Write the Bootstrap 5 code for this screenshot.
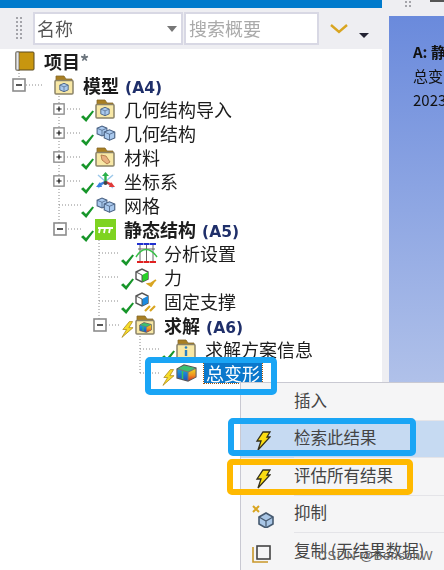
<!DOCTYPE html>
<html lang="zh">
<head>
    <meta charset="UTF-8">
    <meta name="viewport" content="width=device-width, initial-scale=1.0">
    <title>Mechanical</title>
    <link href="https://cdn.jsdelivr.net/npm/bootstrap@5.3.0/dist/css/bootstrap.min.css" rel="stylesheet">
    <style>
        html, body { height: 570px; overflow: hidden; }
        body {
            background-color: #eeeef2;
            font-family: "Noto Sans CJK SC", "Liberation Sans", sans-serif;
            color: #222;
        }
        .stage { width: 444px; height: 570px; filter: blur(0.35px); }
        .left-pane { width: 382px; }
        .title-strip { height: 8px; background-color: #007acc; }
        .tool-strip { height: 41px; padding: 4px 0 4px 15px; gap: 11px; }
        .grip { width: 7px; height: 25px; background-image: radial-gradient(#a4a4aa 1px, transparent 1.2px); background-size: 4px 4px; }
        .combo { width: 150px; height: 33px; background: #fff; border: 2px solid #d8d8e4; padding: 0 4px 0 2px; font-size: 18px; color: #555; }
        .combo-caret { width: 0; height: 0; border-left: 5px solid transparent; border-right: 5px solid transparent; border-top: 6px solid #777; }
        .search-box { width: 135px; height: 33px; margin-left: -10px; background: #fff; border: 2px solid #d8d8e4; padding: 0 3px; font-size: 18px; color: #aaa; }
        .drop-caret { width: 0; height: 0; margin: 14px 0 0 11px; border-left: 5px solid transparent; border-right: 5px solid transparent; border-top: 5px solid #223; }
        .tree-pane { height: 521px; background: #fff; }
        .wires { left: 0; top: 0; }
        .tree-row { height: 24px; font-size: 18px; line-height: 24px; white-space: nowrap; color: #1c1c1c; }
        .lvl-0 { padding-left: 12px; }
        .lvl-1 { padding-left: 53px; }
        .lvl-2 { padding-left: 93px; }
        .lvl-3 { padding-left: 134px; }
        .box-slot { width: 28px; flex: none; }
        .state-slot { width: 14px; flex: none; align-self: flex-end; margin-bottom: -1px; }
        .icon-slot { width: 29px; flex: none; }
        .root-row { padding-left: 15px; }
        .tree-name.fw-bold em { font: bold 15.5px "DejaVu Sans", sans-serif; color: #1f2f6a; margin-left: 2px; }
        .tree-row svg { display: block; }
        .picked { background: #0a78cc; color: #fff; outline: 1px dotted #a4580c; line-height: 20px; padding: 0 2px; margin-left: -1px; }
        .gap-strip { width: 7px; }
        .right-pane { width: 55px; }
        .right-head { height: 16px; padding-left: 15px; }
        .head-grip { width: 7px; height: 8px; background-image: radial-gradient(#a4a4aa 1px, transparent 1.2px); background-size: 4px 4px; }
        .head-stub { width: 14px; height: 2px; margin-left: 19px; background: #555; }
        .blue-view {
            height: 554px; padding: 24px 0 0 24px; overflow: hidden; white-space: nowrap;
            font-size: 15px; line-height: 24px; color: #111;
            background: linear-gradient(#6a8adc, #b4c4ea 70%);
        }
        .ctx-menu { left: 240px; top: 382px; width: 220px; height: 200px; background: #f5f5f6; border: 1px solid #c9c9d2; font-size: 16.5px; color: #444; }
        .ctx-item { height: 37.5px; padding-left: 11px; }
        .ctx-icon { width: 42px; flex: none; }
        .bolt-icon { margin-left: 3px; }
        .ctx-label { flex: 1; height: 100%; display: flex; align-items: center; padding-bottom: 2px; border-bottom: 1px solid #e4e4e8; white-space: nowrap; }
        .ctx-item.hot { background: #c6daf2; }
        .ctx-item:last-child .ctx-label { border-bottom: 0; }
        .mark-box { border: 6px solid #1aa5f5; border-radius: 5px; }
        .mark-one { left: 145px; top: 357px; width: 132px; height: 38px; }
        .mark-two { left: 228px; top: 418px; width: 188px; height: 38px; }
        .mark-three { left: 227px; top: 459px; width: 186px; height: 36px; border-color: #ffb900; }
        .watermark { right: 11px; top: 548px; font: 13px "Liberation Sans", sans-serif; color: #666; letter-spacing: .4px; }
    </style>
</head>
<body>
<svg width="0" height="0" class="position-absolute">
    <defs>
        <linearGradient id="g-left" x1="0" y1="0" x2="0" y2="1"><stop offset="0" stop-color="#18a0e0"/><stop offset="1" stop-color="#2050c0"/></linearGradient>
        <linearGradient id="g-right" x1="0" y1="0" x2="0" y2="1"><stop offset="0" stop-color="#f0d820"/><stop offset=".55" stop-color="#f09020"/><stop offset="1" stop-color="#d83020"/></linearGradient>
        <symbol id="i-plus" viewBox="0 0 14 14"><rect x="1" y="1" width="12" height="12" fill="#fff" stroke="#8c8c8c" stroke-width="1.6"/><path d="M4 7h6M7 4v6" stroke="#111" stroke-width="1.4"/></symbol>
        <symbol id="i-minus" viewBox="0 0 14 14"><rect x="1" y="1" width="12" height="12" fill="#fff" stroke="#8c8c8c" stroke-width="1.6"/><path d="M4 7h6" stroke="#111" stroke-width="1.4"/></symbol>
        <symbol id="i-check" viewBox="0 0 13 12"><path d="M0 7l2.2-1.8L5 8 11.4 0.5 13 1.6 5.2 12z" fill="#17962a"/></symbol>
        <symbol id="i-bolt" viewBox="0 0 14 18"><path d="M9 0.5L2 9h4l-5 8.5L13 7H8.5l4-6.5z" fill="#f6dc2a" stroke="#a8861a" stroke-width=".8"/></symbol>
        <symbol id="i-bolt-dark" viewBox="0 0 16 20"><path d="M8 1h7l-3 5h3L3 19l3-9H2z" fill="#fbdc12" stroke="#34301a" stroke-width="1.3"/></symbol>
        <symbol id="i-folder" viewBox="0 0 20 20"><path d="M2 6V1h8l2 3h6v2z" fill="#a97f22" stroke="#85682a" stroke-width=".8"/><rect x="1" y="5.5" width="18" height="13.5" rx="1" fill="#f8e8a6" stroke="#8b8368" stroke-width="1.5"/></symbol>
        <symbol id="i-cube" viewBox="0 0 20 16"><path d="M3 4l7-3 7 3v8l-7 3-7-3z" fill="#a9c9ee" stroke="#4a6284" stroke-width="1.5"/><path d="M3 4l7 3 7-3M10 7v8" fill="none" stroke="#4a6284" stroke-width="1.1"/></symbol>
        <symbol id="i-rainbow" viewBox="0 0 21 18"><path d="M1 5l7-4 12 3v9l-8 4-11-3z" fill="#777" stroke="#555" stroke-width="1.2"/><path d="M1.5 5.5l10 3v8l-10-3z" fill="url(#g-left)"/><path d="M12.500 8.500l7-3.500v8l-7 3.500z" fill="url(#g-right)"/><path d="M2 4.500l6-3 11 2.500-7 3.500z" fill="#3cc070"/><path d="M6.500 7v8" stroke="#38c060" stroke-width="1.500"/></symbol>
    </defs>
</svg>
<div class="stage d-flex position-relative">
    <div class="left-pane">
        <div class="title-strip"></div>
        <div class="tool-strip d-flex align-items-center">
            <div class="grip"></div>
            <div class="combo d-flex align-items-center justify-content-between"><span>名称</span><span class="combo-caret"></span></div>
            <div class="search-box d-flex align-items-center"><span>搜索概要</span></div>
            <div class="d-flex align-items-center">
                <svg width="18" height="10" viewBox="0 0 18 10"><path d="M1 1l8 7 8-7" fill="none" stroke="#d9a521" stroke-width="2.4"/></svg>
                <span class="drop-caret"></span>
            </div>
        </div>
        <div class="tree-pane position-relative">
            <svg class="wires position-absolute" width="382" height="521" viewBox="0 49 382 521">
                <path d="M19 70V79M26 85H42M59 96V229M64 109H81M64 133H81M64 157H81M64 181H81M59 205H81M65 229H81M99 240V319M99 253H120M99 277H120M99 301H120M106 325H120M140 336V373M140 349H161M140 373H161" fill="none" stroke="#8a8a8a" stroke-dasharray="1 2"/>
            </svg>
            <div class="position-relative">
                <div class="tree-row root-row d-flex align-items-center">
                    <div class="icon-slot"><svg width="20" height="20" viewBox="0 0 20 20"><rect x="1" y="1" width="18" height="18" rx="1" fill="#c8960f" stroke="#5a4a20"/><rect x="1" y="1" width="3" height="18" fill="#e8e8e8" stroke="#555" stroke-width=".7"/></svg></div>
                    <span class="tree-name fw-bold">项目<span class="text-secondary">*</span></span>
                </div>
                <div class="tree-row lvl-0 d-flex align-items-center">
                    <div class="box-slot"><svg width="14" height="14"><use href="#i-minus"/></svg></div>
                    <div class="state-slot"></div>
                    <div class="icon-slot"><svg width="20" height="20"><use href="#i-folder"/><use href="#i-cube" x="4" y="7" width="12" height="11"/></svg></div>
                    <span class="tree-name fw-bold">模型 <em>(A4)</em></span>
                </div>
                <div class="tree-row lvl-1 d-flex align-items-center">
                    <div class="box-slot"><svg width="12" height="12"><use href="#i-plus"/></svg></div>
                    <div class="state-slot"><svg width="13" height="12"><use href="#i-check"/></svg></div>
                    <div class="icon-slot"><svg width="20" height="20"><use href="#i-folder"/><use href="#i-cube" x="4" y="7" width="12" height="11"/></svg></div>
                    <span class="tree-name">几何结构导入</span>
                </div>
                <div class="tree-row lvl-1 d-flex align-items-center">
                    <div class="box-slot"><svg width="12" height="12"><use href="#i-plus"/></svg></div>
                    <div class="state-slot"><svg width="13" height="12"><use href="#i-check"/></svg></div>
                    <div class="icon-slot"><svg width="22" height="17"><use href="#i-cube" x="0" y="0" width="14" height="12"/><use href="#i-cube" x="7" y="3" width="15" height="14"/></svg></div>
                    <span class="tree-name">几何结构</span>
                </div>
                <div class="tree-row lvl-1 d-flex align-items-center">
                    <div class="box-slot"><svg width="12" height="12"><use href="#i-plus"/></svg></div>
                    <div class="state-slot"><svg width="13" height="12"><use href="#i-check"/></svg></div>
                    <div class="icon-slot"><svg width="20" height="20"><use href="#i-folder"/><path d="M6 8l5 1 4 6-3 2-5-4z" fill="#e8b080" stroke="#a87040" stroke-width=".8"/></svg></div>
                    <span class="tree-name">材料</span>
                </div>
                <div class="tree-row lvl-1 d-flex align-items-center">
                    <div class="box-slot"><svg width="12" height="12"><use href="#i-plus"/></svg></div>
                    <div class="state-slot"><svg width="13" height="12"><use href="#i-check"/></svg></div>
                    <div class="icon-slot"><svg width="21" height="21" viewBox="0 0 21 21"><path d="M3 4l15 13M18 4L3 17" stroke="#9cc8ea" stroke-width="1.5"/><path d="M10.500 3v8" stroke="#2ab04a" stroke-width="2.400"/><path d="M7 5l3.500-4L14 5z" fill="#2ab04a"/><path d="M10 11l-6 3" stroke="#3a7fe0" stroke-width="2.400"/><path d="M1 16l4-5 2 5z" fill="#3a7fe0"/><path d="M11 11l6 3" stroke="#e03a3a" stroke-width="2.400"/><path d="M20 16l-4-5-2 5z" fill="#e03a3a"/><circle cx="10.500" cy="12" r="2" fill="#444"/></svg></div>
                    <span class="tree-name">坐标系</span>
                </div>
                <div class="tree-row lvl-1 d-flex align-items-center">
                    <div class="box-slot"></div>
                    <div class="state-slot"><svg width="13" height="12"><use href="#i-check"/></svg></div>
                    <div class="icon-slot"><svg width="22" height="17"><use href="#i-cube" x="0" y="0" width="14" height="12"/><use href="#i-cube" x="7" y="3" width="15" height="14"/></svg></div>
                    <span class="tree-name">网格</span>
                </div>
                <div class="tree-row lvl-1 d-flex align-items-center">
                    <div class="box-slot"><svg width="14" height="14"><use href="#i-minus"/></svg></div>
                    <div class="state-slot"><svg width="13" height="12"><use href="#i-check"/></svg></div>
                    <div class="icon-slot"><svg width="21" height="21" viewBox="0 0 21 21"><rect width="21" height="21" fill="#7ed321"/><path d="M3 9h15M5 9l-1 5M10 9l-1 5M15 9l-1 5" stroke="#fff" stroke-width="1.8" fill="none"/></svg></div>
                    <span class="tree-name fw-bold">静态结构 <em>(A5)</em></span>
                </div>
                <div class="tree-row lvl-2 d-flex align-items-center">
                    <div class="box-slot"></div>
                    <div class="state-slot"><svg width="13" height="12"><use href="#i-check"/></svg></div>
                    <div class="icon-slot"><svg width="23" height="22" viewBox="0 0 23 22"><path d="M5 2v18M11.500 2v18M18 2v18M3 7h17" stroke="#666" fill="none"/><path d="M2 2h6M8.500 2h6M15 2h6" stroke="#2030d0" stroke-width="2"/><path d="M2 20h6M8.500 20h6M15 20h6" stroke="#e02020" stroke-width="2"/><path d="M1 15c6-10 14-10 21 0" fill="none" stroke="#38c048" stroke-width="1.500"/></svg></div>
                    <span class="tree-name">分析设置</span>
                </div>
                <div class="tree-row lvl-2 d-flex align-items-center">
                    <div class="box-slot"></div>
                    <div class="state-slot"><svg width="13" height="12"><use href="#i-check"/></svg></div>
                    <div class="icon-slot"><svg width="22" height="20" viewBox="0 0 22 20"><path d="M1 5l6-3 6 3v7l-6 3-6-3z" fill="#fff" stroke="#555" stroke-width="1.400"/><path d="M7 8l6-3v7l-6 3z" fill="#28d028"/><path d="M1 5l6 3v7" fill="none" stroke="#555"/><path d="M21 13l-6 4M13 17l5-1-2 3z" stroke="#d9a521" stroke-width="1.800" fill="#d9a521"/></svg></div>
                    <span class="tree-name">力</span>
                </div>
                <div class="tree-row lvl-2 d-flex align-items-center">
                    <div class="box-slot"></div>
                    <div class="state-slot"><svg width="13" height="12"><use href="#i-check"/></svg></div>
                    <div class="icon-slot"><svg width="22" height="21" viewBox="0 0 22 21"><path d="M1 5l6-3 6 3v7l-6 3-6-3z" fill="#fff" stroke="#555" stroke-width="1.400"/><path d="M7 8l6-3v7l-6 3z" fill="#1b8ae0"/><path d="M1 5l6 3v7" fill="none" stroke="#555"/><path d="M10 20l5-5M15 20l5-5" stroke="#d9a521" stroke-width="2.200"/></svg></div>
                    <span class="tree-name">固定支撑</span>
                </div>
                <div class="tree-row lvl-2 d-flex align-items-center">
                    <div class="box-slot"><svg width="14" height="14"><use href="#i-minus"/></svg></div>
                    <div class="state-slot"><svg width="13" height="17"><use href="#i-bolt"/></svg></div>
                    <div class="icon-slot"><svg width="20" height="20"><use href="#i-folder"/><use href="#i-rainbow" x="4" y="7" width="13" height="11"/></svg></div>
                    <span class="tree-name fw-bold">求解 <em>(A6)</em></span>
                </div>
                <div class="tree-row lvl-3 d-flex align-items-center">
                    <div class="box-slot"></div>
                    <div class="state-slot"><svg width="13" height="12"><use href="#i-check"/></svg></div>
                    <div class="icon-slot"><svg width="20" height="20" viewBox="0 0 20 20"><use href="#i-folder" width="20" height="20"/><circle cx="10" cy="8.500" r="1.300" fill="#2a80c0"/><path d="M10 11v6" stroke="#2a80c0" stroke-width="2.400"/></svg></div>
                    <span class="tree-name">求解方案信息</span>
                </div>
                <div class="tree-row lvl-3 d-flex align-items-center">
                    <div class="box-slot"></div>
                    <div class="state-slot"><svg width="13" height="17"><use href="#i-bolt"/></svg></div>
                    <div class="icon-slot"><svg width="21" height="18"><use href="#i-rainbow"/></svg></div>
                    <span class="tree-name picked">总变形</span>
                </div>
            </div>
        </div>
    </div>
    <div class="gap-strip"></div>
    <div class="right-pane">
        <div class="right-head d-flex"><div class="head-grip"></div><div class="head-stub"></div></div>
        <div class="blue-view">
            <div class="fw-bold">A: 静</div>
            <div>总变</div>
            <div>2023</div>
        </div>
    </div>

    <div class="ctx-menu position-absolute">
        <div class="ctx-item d-flex align-items-center"><div class="ctx-icon"></div><div class="ctx-label">插入</div></div>
        <div class="ctx-item hot d-flex align-items-center"><div class="ctx-icon"><svg class="bolt-icon" width="16" height="20"><use href="#i-bolt-dark"/></svg></div><div class="ctx-label">检索此结果</div></div>
        <div class="ctx-item d-flex align-items-center"><div class="ctx-icon"><svg class="bolt-icon" width="16" height="20"><use href="#i-bolt-dark"/></svg></div><div class="ctx-label">评估所有结果</div></div>
        <div class="ctx-item d-flex align-items-center"><div class="ctx-icon"><svg width="24" height="24" viewBox="0 0 24 24"><path d="M1 2l6 6M7 2L1 8" stroke="#d9a521" stroke-width="2"/><path d="M7 13l7-4 7 4v7l-7 4-7-4z" fill="#a9c6e6" stroke="#465a70" stroke-width="1.600"/><path d="M7 13l7 4 7-4M14 17v7" fill="none" stroke="#465a70" stroke-width="1.200"/></svg></div><div class="ctx-label">抑制</div></div>
        <div class="ctx-item d-flex align-items-center"><div class="ctx-icon"><svg width="20" height="20" viewBox="0 0 20 20"><path d="M1 3v15h15" fill="none" stroke="#c9982a" stroke-width="1.600"/><rect x="5" y="2" width="13" height="13" fill="none" stroke="#444" stroke-width="1.600"/></svg></div><div class="ctx-label">复制 (无结果数据)</div></div>
    </div>
    <div class="mark-box mark-one position-absolute"></div>
    <div class="mark-box mark-two position-absolute"></div>
    <div class="mark-box mark-three position-absolute"></div>
    <div class="watermark position-absolute">CSDN @BensonW</div>
</div>
<script src="https://cdn.jsdelivr.net/npm/bootstrap@5.3.0/dist/js/bootstrap.bundle.min.js"></script>
</body>
</html>
